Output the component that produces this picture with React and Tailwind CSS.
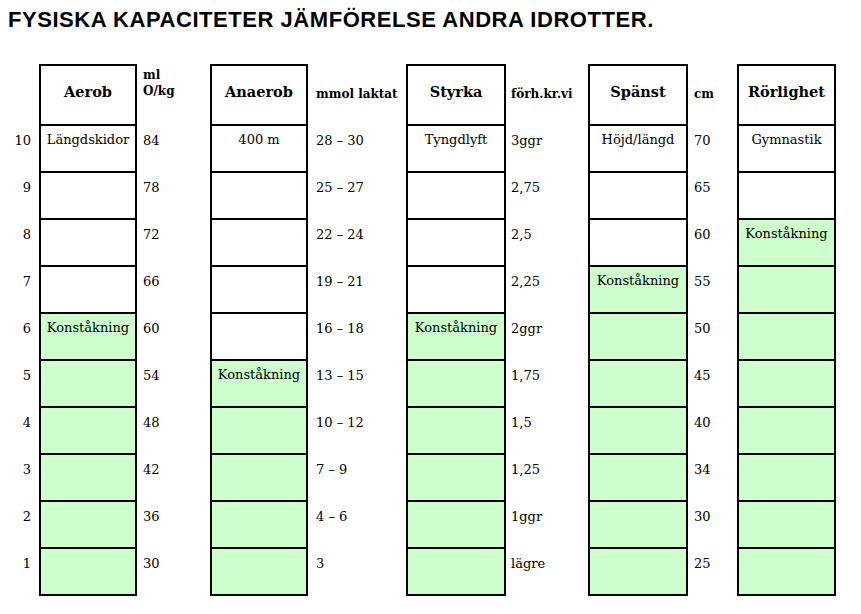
import React from "react";

const rows = [10, 9, 8, 7, 6, 5, 4, 3, 2, 1];

const cats = [
  {
    name: "Aerob",
    top: "Längdskidor",
    green: 6,
    unit: (
      <>
        ml
        <br />
        O/kg
      </>
    ),
    unitTop: true,
    unitW: "w-[73px]",
    unitPl: "pl-[6px]",
    boxW: "w-[98px]",
    values: ["84", "78", "72", "66", "60", "54", "48", "42", "36", "30"],
  },
  {
    name: "Anaerob",
    top: "400 m",
    green: 5,
    unit: "mmol laktat",
    unitW: "w-[98px]",
    unitPl: "pl-[8px]",
    boxW: "w-[98px]",
    values: ["28 – 30", "25 – 27", "22 – 24", "19 – 21", "16 – 18", "13 – 15", "10 – 12", "7 – 9", "4 – 6", "3"],
  },
  {
    name: "Styrka",
    top: "Tyngdlyft",
    green: 6,
    unit: "förh.kr.vi",
    unitW: "w-[82px]",
    unitPl: "pl-[5px]",
    boxW: "w-[100px]",
    values: ["3ggr", "2,75", "2,5", "2,25", "2ggr", "1,75", "1,5", "1,25", "1ggr", "lägre"],
  },
  {
    name: "Spänst",
    top: "Höjd/längd",
    green: 7,
    unit: "cm",
    unitW: "w-[49px]",
    unitPl: "pl-[6px]",
    boxW: "w-[100px]",
    values: ["70", "65", "60", "55", "50", "45", "40", "34", "30", "25"],
  },
  {
    name: "Rörlighet",
    top: "Gymnastik",
    green: 8,
    unit: null,
    boxW: "w-[99px]",
    values: null,
  },
];

function Box({ c }) {
  return (
    <div className={`${c.boxW} shrink-0 border-2 border-black flex flex-col`}>
      <div className="h-[58px] flex items-center justify-center pb-[6px] font-bold text-[14.5px]">
        {c.name}
      </div>
      {rows.map((r) => {
        let text = "";
        if (r === 10) text = c.top;
        if (r === c.green) text = "Konståkning";
        const green = r <= c.green;
        return (
          <div
            key={r}
            className={`h-[47px] border-t-2 border-black text-center pt-[6px] leading-[16px] text-[13px] whitespace-nowrap ${
              green ? "bg-[#ccffcc]" : "bg-white"
            }`}
          >
            {text}
          </div>
        );
      })}
    </div>
  );
}

function Unit({ c }) {
  return (
    <div className={`${c.unitW} shrink-0 flex flex-col ${c.unitPl}`}>
      <div
        className={`h-[62px] flex ${
          c.unitTop ? "items-start pt-[3px]" : "items-center pb-[2px]"
        } font-bold text-[12px] leading-[16px] whitespace-nowrap`}
      >
        <div>{c.unit}</div>
      </div>
      {c.values.map((v, i) => (
        <div key={i} className="h-[47px] pt-[7px] text-[13px] leading-[16px] whitespace-nowrap">
          {v}
        </div>
      ))}
    </div>
  );
}

export default function App() {
  return (
    <div
      className="w-[861px] h-[614px] bg-white text-black overflow-hidden relative"
      style={{ fontFamily: '"DejaVu Serif", serif' }}
    >
      <div
        className="pl-[8px] pt-[9px] text-[22px] tracking-[0.55px] font-bold leading-none whitespace-nowrap h-[31px]"
        style={{ fontFamily: '"Liberation Sans", Arial, sans-serif' }}
      >
        FYSISKA KAPACITETER JÄMFÖRELSE ANDRA IDROTTER.
      </div>
      <div className="flex items-start mt-[33px]">
        <div className="w-[39px] shrink-0 flex flex-col pr-[8px] text-right">
          <div className="h-[62px]" />
          {rows.map((r) => (
            <div key={r} className="h-[47px] pt-[7px] text-[13px] leading-[16px]">
              {r}
            </div>
          ))}
        </div>
        {cats.map((c) => (
          <React.Fragment key={c.name}>
            <Box c={c} />
            {c.values && <Unit c={c} />}
          </React.Fragment>
        ))}
      </div>
    </div>
  );
}
